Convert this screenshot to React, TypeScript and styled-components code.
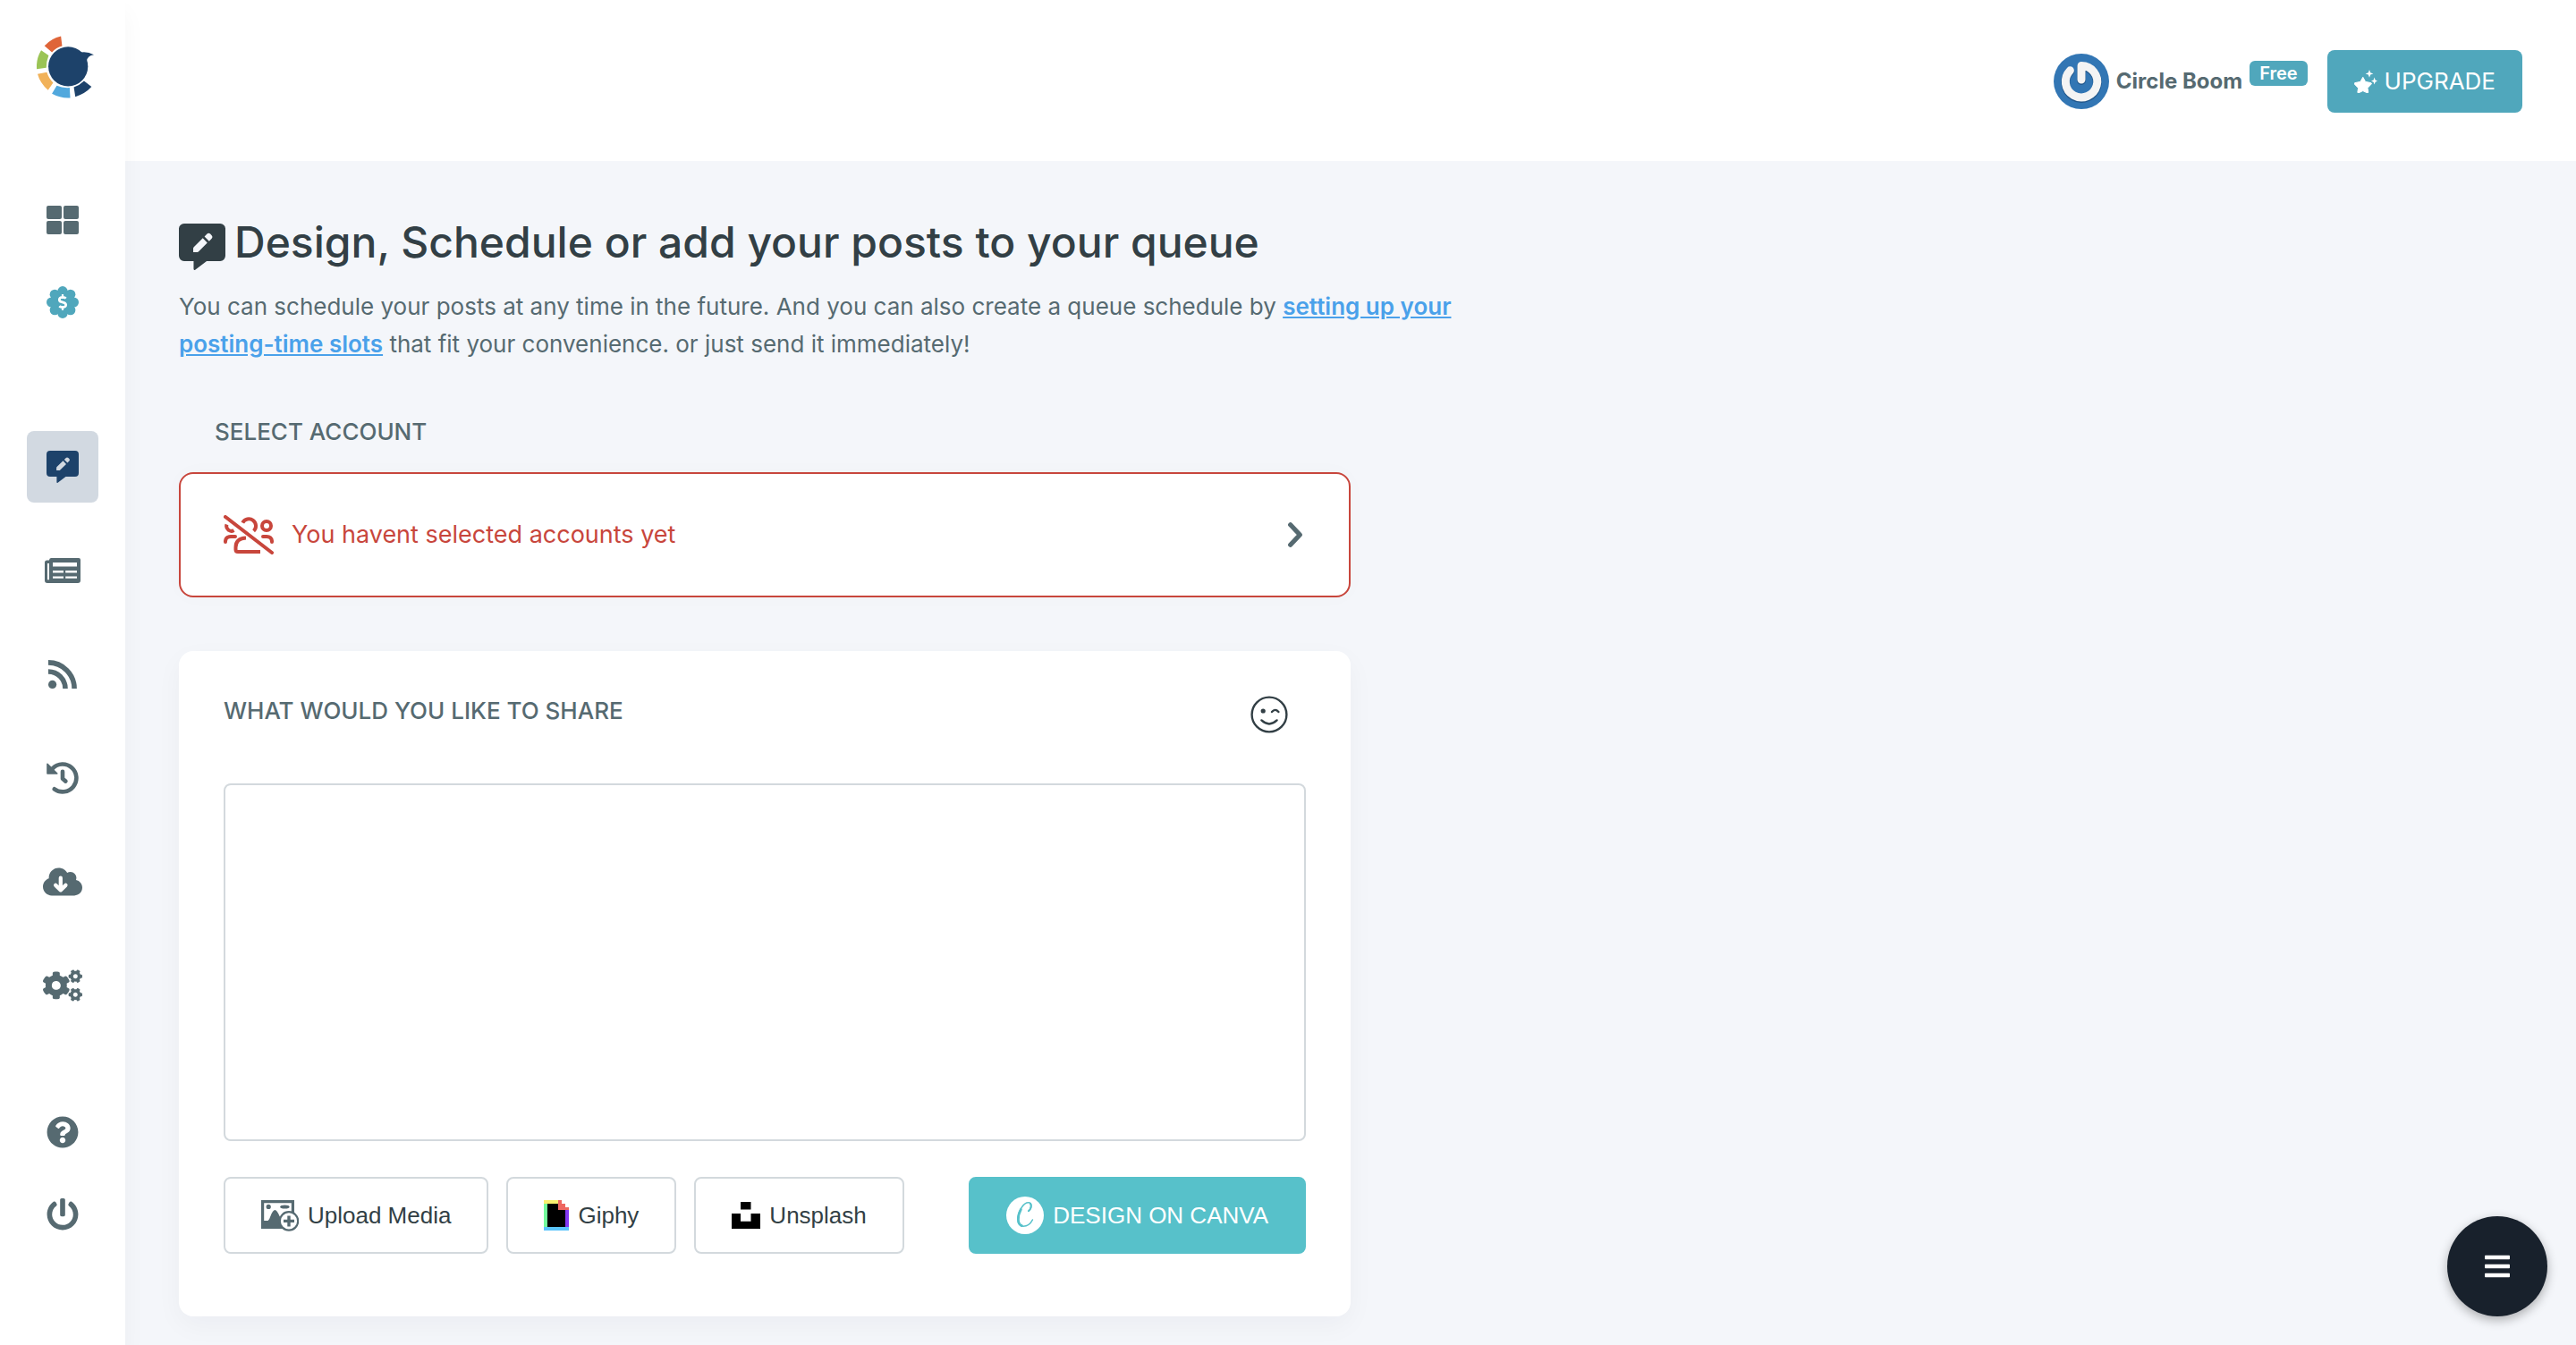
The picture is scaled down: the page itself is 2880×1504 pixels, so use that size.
import React from "react";
import styled, { createGlobalStyle, css } from "styled-components";
import { FaBars, FaCogs, FaDollarSign, FaPowerOff, FaQuestionCircle } from "react-icons/fa";

const color = {
  page: "#f4f6fa",
  text: "#566a71",
  heading: "#323f45",
  teal: "#50a7bc",
  canva: "#57c1ca",
  navy: "#1d426a",
  active: "#d2d9e1",
  danger: "#c8463c",
  border: "#d3d9dd",
  link: "#4aa1ea",
  fab: "#18212c",
};

const uiFont = `Inter, "Noto Sans", sans-serif`;
const buttonFont = `"Liberation Sans", Arial, sans-serif`;

const GlobalStyle = createGlobalStyle`
  *, *::before, *::after { box-sizing: border-box; }
  body {
    margin: 0;
    background: ${color.page};
    color: ${color.text};
    font-family: ${uiFont};
    font-size: 26px;
    line-height: 42px;
  }
  svg { display: block; flex: none; }
`;

/* ---------- layout ---------- */

const Page = styled.div`
  display: flex;
  min-height: 100vh;
`;

const Sidebar = styled.aside`
  position: relative;
  z-index: 1;
  display: flex;
  flex-direction: column;
  align-items: center;
  flex: 0 0 140px;
  padding: 40px 0 32px;
  background: #fff;
  box-shadow: 0 14px 24px rgba(0, 0, 0, 0.04);
`;

const LogoLink = styled.a`
  display: block;
  margin-left: 6px;
`;

const NavGroup = styled.nav<{ $gap: number; $top: number }>`
  display: flex;
  flex-direction: column;
  gap: ${(p) => p.$gap}px;
  margin-top: ${(p) => p.$top}px;
`;

const NavLink = styled.a<{ $active?: boolean; $accent?: boolean }>`
  display: flex;
  align-items: center;
  justify-content: center;
  width: 80px;
  height: 80px;
  border-radius: 8px;
  color: ${(p) => (p.$accent ? color.teal : color.text)};
  ${(p) =>
    p.$active &&
    css`
      background: ${color.active};
      color: ${color.navy};
    `}
`;

const Body = styled.div`
  flex: 1;
  min-width: 0;
`;

const Header = styled.header`
  display: flex;
  align-items: center;
  justify-content: flex-end;
  gap: 22px;
  padding: 56px 60px 54px;
  background: #fff;
`;

const User = styled.a`
  display: flex;
  align-items: center;
  gap: 8px;
  color: inherit;
  text-decoration: none;
`;

const UserName = styled.span`
  font-size: 24px;
  font-weight: 700;
`;

const Badge = styled.span`
  margin-bottom: 18px;
  padding: 0 11px;
  border-radius: 6px;
  background: ${color.teal};
  color: #fff;
  font-size: 20px;
  font-weight: 600;
  line-height: 28px;
`;

const UpgradeButton = styled.button`
  display: flex;
  align-items: center;
  gap: 8px;
  height: 70px;
  padding: 0 30px;
  border: 0;
  border-radius: 8px;
  background: ${color.teal};
  color: #fff;
  font: 400 26px/42px ${uiFont};
  cursor: pointer;
`;

const Main = styled.main`
  padding: 60px 60px 32px;
`;

const Title = styled.h1`
  display: flex;
  align-items: flex-end;
  gap: 10px;
  margin: 0;
  color: ${color.heading};
  font-size: 48px;
  font-weight: 500;
  line-height: 62px;
`;

const Intro = styled.p`
  width: 55%;
  margin: 20px 0 0;
`;

const IntroLink = styled.a`
  color: ${color.link};
  font-weight: 600;
  text-decoration: underline;
`;

const Column = styled.div`
  width: 50%;
  min-width: 1240px;
`;

const SectionTitle = styled.h2`
  margin: 0;
  font-size: 26px;
  font-weight: 500;
  line-height: 34px;
`;

const AccountSection = styled.section`
  padding-top: 60px;

  ${SectionTitle} {
    padding-left: 40px;
  }
`;

const cardShape = css`
  border-radius: 16px;
  background: #fff;
`;

const AccountPicker = styled.button`
  ${cardShape}
  display: flex;
  align-items: center;
  width: 100%;
  height: 140px;
  margin-top: 28px;
  padding: 0 48px;
  border: 2px solid ${color.danger};
  box-shadow: 0 0 24px rgba(20, 20, 60, 0.02);
  color: ${color.danger};
  font: 400 27px/42px ${uiFont};
  text-align: left;
  cursor: pointer;
`;

const PickerLabel = styled.span`
  flex: 1;
  margin-left: 20px;
`;

const PickerArrow = styled.span`
  color: ${color.text};
`;

const Composer = styled.section`
  ${cardShape}
  margin-top: 60px;
  padding: 50px 50px 70px;
  box-shadow: 0 10px 30px rgba(20, 20, 60, 0.04);
`;

const ComposerHead = styled.div`
  display: flex;
  justify-content: space-between;
  align-items: flex-start;
`;

const EmojiButton = styled.button`
  margin-right: 20px;
  padding: 0;
  border: 0;
  background: none;
  color: ${color.heading};
  cursor: pointer;
`;

const PostText = styled.textarea`
  display: block;
  width: 100%;
  height: 400px;
  margin-top: 56px;
  padding: 20px;
  border: 2px solid ${color.border};
  border-radius: 8px;
  background: #fff;
  color: ${color.heading};
  font: 400 26px/42px ${uiFont};
  resize: none;
`;

const Actions = styled.div`
  display: flex;
  gap: 20px;
  margin-top: 40px;
`;

const ActionButton = styled.button<{ $primary?: boolean }>`
  display: flex;
  align-items: center;
  gap: 10px;
  height: 86px;
  padding: 0 40px;
  border: 2px solid ${(p) => (p.$primary ? color.canva : color.border)};
  border-radius: 8px;
  background: ${(p) => (p.$primary ? color.canva : "#fff")};
  color: ${(p) => (p.$primary ? "#fff" : color.heading)};
  font: 400 26px/30px ${buttonFont};
  margin-left: ${(p) => (p.$primary ? "auto" : "0")};
  cursor: pointer;
`;

const MenuFab = styled.button`
  position: fixed;
  right: 32px;
  bottom: 32px;
  z-index: 2;
  display: flex;
  align-items: center;
  justify-content: center;
  width: 112px;
  height: 112px;
  padding: 0;
  border: 0;
  border-radius: 50%;
  background: ${color.fab};
  color: #fff;
  box-shadow: 0 4px 12px rgba(0, 0, 0, 0.3);
  cursor: pointer;
`;

/* ---------- drawings ---------- */

const Logo = () => (
  <svg width="64" height="70" viewBox="123 119 191 208" aria-hidden="true">
    <path fill="#df6539" d="M149 152Q172 127 204 120L208 153Q188 158 174 174Z" />
    <path fill="#9bc455" d="M138 167L163 184Q155 204 155 225L123 230Q121 194 138 167Z" />
    <path fill="#f1b25a" d="M126 246L157 240Q163 260 178 275L161 300Q134 276 126 246Z" />
    <path fill="#51a8dd" d="M190 285Q210 294 233 292L235 326Q203 328 174 312Z" />
    <path fill={color.navy} d="M247 290Q267 283 281 269L306 289Q284 313 252 322Z" />
    <circle cx="228" cy="221" r="66" fill={color.navy} />
    <path fill={color.navy} d="M262 176Q288 168 314 182Q292 184 290 204Z" />
  </svg>
);

const GridIcon = () => (
  <svg width="36" height="32" viewBox="0 0 36 32" fill="currentColor" aria-hidden="true">
    <rect width="17" height="15" rx="2" />
    <rect x="19" width="17" height="15" rx="2" />
    <rect y="17" width="17" height="15" rx="2" />
    <rect x="19" y="17" width="17" height="15" rx="2" />
  </svg>
);

const lobes = [0, 1, 2, 3, 4, 5, 6, 7].map((i) => (i * Math.PI) / 4);

const PriceBadgeIcon = () => (
  <svg width="36" height="36" viewBox="0 0 36 36" fill="currentColor" aria-hidden="true">
    <circle cx="18" cy="18" r="14" />
    {lobes.map((a) => (
      <circle key={a} cx={18 + 12.4 * Math.cos(a)} cy={18 + 12.4 * Math.sin(a)} r="5.6" />
    ))}
    <FaDollarSign x="9" y="9" size={18} color="#fff" />
  </svg>
);

const ComposeIcon = ({ size, cut }: { size: number; cut: string }) => (
  <svg width={size} height={size} viewBox="0 0 36 36" aria-hidden="true">
    <path
      fill="currentColor"
      d="M4 0H32A4 4 0 0 1 36 4V25A4 4 0 0 1 32 29H21.5L12.6 35.8Q11.4 36.4 11.4 35V29H4A4 4 0 0 1 0 25V4A4 4 0 0 1 4 0Z"
    />
    <path
      fill={cut}
      d="M18.5 11.3L22 14.9L15.3 21.6Q14.8 22.1 14.2 22.1H11.1V19.2Q11.1 18.6 11.6 18.1Z
         M19.8 10L21.8 8Q23 6.8 24.3 8L25.4 9.1Q26.6 10.3 25.4 11.6L23.4 13.6Z"
    />
  </svg>
);

const NewsIcon = () => (
  <svg width="40" height="28" viewBox="0 0 40 28" aria-hidden="true">
    <path
      fill="currentColor"
      fillRule="evenodd"
      d="M7 0H38Q40 0 40 2V25Q40 28 37 28H3Q0 28 0 25V5Q0 2.5 2.5 2.5H5Q5 0 7 0Z
         M9 5V9.4H36V5ZM9 14V16.4H21V14ZM23.2 14V16.4H36V14ZM9 20.4V22.8H21V20.4ZM23.2 20.4V22.8H36V20.4Z
         M3 6V23.5Q3 24.4 4 24.4Q5 24.4 5 23.5V6Z"
    />
  </svg>
);

const FeedIcon = () => (
  <svg
    width="32"
    height="32"
    viewBox="0 0 32 32"
    fill="none"
    stroke="currentColor"
    strokeWidth="5.6"
    aria-hidden="true"
  >
    <circle cx="4.6" cy="27.4" r="4.6" fill="currentColor" stroke="none" />
    <path d="M0 2.9A29.1 29.1 0 0 1 29.1 32" />
    <path d="M0 13A19 19 0 0 1 19 32" />
  </svg>
);

const HistoryIcon = () => (
  <svg
    width="36"
    height="36"
    viewBox="0 0 36 36"
    fill="none"
    stroke="currentColor"
    strokeWidth="4.6"
    strokeLinecap="round"
    strokeLinejoin="round"
    aria-hidden="true"
  >
    <path d="M7 7.2A15.4 15.4 0 1 1 8.8 30.3" />
    <path d="M18 10.8V18.8L21.4 21.6" />
    <path d="M1 2.4V13H11.8Z" fill="currentColor" strokeWidth="1.6" />
  </svg>
);

const CloudIcon = () => (
  <svg width="44" height="36" viewBox="0 0 640 512" aria-hidden="true">
    <path
      fill="currentColor"
      d="M144 480C64.5 480 0 415.5 0 336c0-62.8 40.2-116.2 96.2-135.9c-.1-2.7-.2-5.4-.2-8.1c0-88.4 71.6-160 160-160c59.3 0 111 32.2 138.7 80.2C409.9 102 428.3 96 448 96c53 0 96 43 96 96c0 12.2-2.3 23.8-6.4 34.6C596 238.4 640 290.1 640 352c0 70.7-57.3 128-128 128H144z"
    />
    <path
      d="M288 194V388M206 312L288 392L370 312"
      fill="none"
      stroke="#fff"
      strokeWidth="62"
      strokeLinecap="round"
      strokeLinejoin="round"
    />
  </svg>
);

const ChevronIcon = () => (
  <svg
    width="20"
    height="28"
    viewBox="0 0 20 28"
    fill="none"
    stroke="currentColor"
    strokeWidth="5.2"
    strokeLinecap="round"
    strokeLinejoin="round"
    aria-hidden="true"
  >
    <path d="M2.7 2.8L13.3 14L2.7 25.2" />
  </svg>
);

const Avatar = () => (
  <svg width="62" height="62" viewBox="0 0 62 62" fill="none" role="img" aria-label="Profile">
    <circle cx="31" cy="31" r="31" fill="#3276b4" />
    <g strokeLinecap="round" strokeLinejoin="round">
      <path d="M31 30V14.5A17.7 17.7 0 1 1 18.4 19.8" stroke="#22588c" strokeWidth="10" />
      <path d="M31 29V13.5A17.7 17.7 0 1 1 18.4 18.8" stroke="#f4f4f4" strokeWidth="9" />
    </g>
  </svg>
);

const SparkleIcon = () => (
  <svg width="26" height="26" viewBox="0 0 26 26" fill="currentColor" aria-hidden="true">
    <path
      d="M9.8 8.3L12.6 13.4L18.6 14.6Q20 15 19 16.2L15 20.4L15.7 25Q15.7 26.2 14.5 25.8L9.8 23.6L5 25.8Q3.8 26.2 3.9 25L4.6 20.4L.5 16.2Q-.3 15 1 14.6L6.9 13.4Z"
      stroke="currentColor"
      strokeWidth="1"
    />
    <path d="M17 0L18.2 3.2L21.4 4.4L18.2 5.6L17 8.8L15.8 5.6L12.6 4.4L15.8 3.2Z" />
    <path d="M22.6 8.6L23.6 11.5L26 12.6L23.6 13.7L22.6 16.6L21.6 13.7L19 12.6L21.6 11.5Z" />
  </svg>
);

const UsersSlashIcon = () => (
  <svg
    width="56"
    height="44"
    viewBox="0 0 56 44"
    fill="none"
    stroke="currentColor"
    strokeWidth="4"
    aria-hidden="true"
  >
    <path d="M2 2L54 42" strokeLinecap="round" />
    <circle cx="48" cy="12" r="5" />
    <path d="M3.5 10.5A5.5 5.5 0 0 0 11.5 17" />
    <path d="M21.3 8.6A7.8 7.8 0 1 1 33.6 17.8" />
    <path d="M2 30V29Q2.5 24 8 24H13" strokeLinecap="round" />
    <path d="M44 24H48Q53.5 24 54 29V30" strokeLinecap="round" />
    <path d="M25 25.5Q13.5 26 13.5 36V38.5Q13.5 41 16 41H41" />
  </svg>
);

const WinkIcon = () => (
  <svg
    width="42"
    height="42"
    viewBox="0 0 42 42"
    fill="none"
    stroke="currentColor"
    strokeWidth="2.4"
    strokeLinecap="round"
    aria-hidden="true"
  >
    <circle cx="21" cy="21" r="19.4" />
    <circle cx="14.2" cy="17" r="2.6" fill="currentColor" stroke="none" />
    <path d="M24 18Q27.6 13.8 31.4 18" />
    <path d="M12.4 27.4Q21 35.4 29.6 27.4" />
  </svg>
);

const UploadIcon = () => (
  <svg width="42" height="36" viewBox="0 0 42 36" aria-hidden="true">
    <g fill={color.text}>
      <path fillRule="evenodd" d="M0 1H37V33H0ZM3.2 4.2V24H33.8V4.2Z" />
      <circle cx="8.2" cy="8.4" r="2.6" />
      <ellipse cx="26.4" cy="8.4" rx="5.2" ry="2" />
      <path d="M3 24H7.6Q9.4 22.6 10.6 18.6Q13 12 15.4 12Q17.6 12 20.6 19L24 24V33H3Z" />
    </g>
    <circle cx="31" cy="24.4" r="10.2" fill="#fff" stroke={color.text} strokeWidth="2.2" />
    <path d="M25 24.4H37M31 18.4V30.4" stroke={color.text} strokeWidth="3.4" />
  </svg>
);

const GiphyIcon = () => (
  <svg width="28" height="34" viewBox="0 0 28 34" shapeRendering="crispEdges" aria-hidden="true">
    <path fill="#000" d="M4 4H24V30H4Z" />
    <path fill="#73fb9b" d="M0 4H4V30H0Z" />
    <path fill="#f9ef6e" d="M0 0H16V4H0Z" />
    <path fill="#5bc5fb" d="M0 30H28V34H0Z" />
    <path fill="#8338f3" d="M24 11H28V30H24Z" />
    <path fill="#ee6660" d="M16 0H20V4H24V8H28V11H16Z" />
  </svg>
);

const UnsplashIcon = () => (
  <svg width="32" height="30" viewBox="0 0 32 30" aria-hidden="true">
    <path fill="#000" d="M10 0H21.5V8.6H10ZM0 13H10V21.8H21.5V13H32V30H0Z" />
  </svg>
);

const CanvaIcon = () => (
  <svg width="42" height="42" viewBox="0 0 42 42" fill="none" aria-hidden="true">
    <circle cx="21" cy="21" r="21" fill="#fff" />
    <g stroke={color.canva} strokeLinecap="round" strokeLinejoin="round">
      <path
        strokeWidth="1.6"
        d="M24.8 16.4C28.4 14.2 29.4 7.2 25.2 6.8C19.4 6.4 13.4 16 13 25C12.8 30 15.4 33.2 19 33.2C23.6 33.2 27.4 30 29.4 26"
      />
      <path strokeWidth="2.8" d="M16.4 14.4C14.2 18.4 13.2 22.4 13.4 26C13.6 29.4 15 31.8 17.4 32.6" />
      <path strokeWidth="2" d="M25.2 15.8C27.8 13.6 28.4 9.4 26.8 7.8" />
    </g>
  </svg>
);

/* ---------- page ---------- */

const mainNav = [
  { label: "Create post", icon: <ComposeIcon size={36} cut={color.active} />, active: true },
  { label: "Articles", icon: <NewsIcon /> },
  { label: "RSS feeds", icon: <FeedIcon /> },
  { label: "History", icon: <HistoryIcon /> },
  { label: "Downloads", icon: <CloudIcon /> },
  { label: "Settings", icon: <FaCogs size={44} /> },
];

export default function App() {
  return (
    <>
      <GlobalStyle />
      <Page>
        <Sidebar>
          <LogoLink href="#home" aria-label="Home">
            <Logo />
          </LogoLink>
          <NavGroup $gap={12} $top={96} aria-label="Overview">
            <NavLink href="#dashboard" aria-label="Dashboard">
              <GridIcon />
            </NavLink>
            <NavLink href="#pricing" aria-label="Pricing" $accent>
              <PriceBadgeIcon />
            </NavLink>
          </NavGroup>
          <NavGroup $gap={36} $top={104} aria-label="Main">
            {mainNav.map((item) => (
              <NavLink
                key={item.label}
                href="#"
                aria-label={item.label}
                aria-current={item.active ? "page" : undefined}
                $active={item.active}
              >
                {item.icon}
              </NavLink>
            ))}
          </NavGroup>
          <NavGroup $gap={12} $top={84} aria-label="Account">
            <NavLink href="#help" aria-label="Help">
              <FaQuestionCircle size={36} />
            </NavLink>
            <NavLink href="#logout" aria-label="Log out">
              <FaPowerOff size={36} />
            </NavLink>
          </NavGroup>
        </Sidebar>

        <Body>
          <Header>
            <User href="#profile">
              <Avatar />
              <UserName>Circle Boom</UserName>
              <Badge>Free</Badge>
            </User>
            <UpgradeButton type="button">
              <SparkleIcon />
              UPGRADE
            </UpgradeButton>
          </Header>

          <Main>
            <Title>
              <ComposeIcon size={52} cut={color.page} />
              Design, Schedule or add your posts to your queue
            </Title>
            <Intro>
              You can schedule your posts at any time in the future. And you can also create a queue
              schedule by <IntroLink href="#slots">setting up your posting-time slots</IntroLink>{" "}
              that fit your convenience. or just send it immediately!
            </Intro>

            <Column>
              <AccountSection>
                <SectionTitle>SELECT ACCOUNT</SectionTitle>
                <AccountPicker type="button">
                  <UsersSlashIcon />
                  <PickerLabel>You havent selected accounts yet</PickerLabel>
                  <PickerArrow>
                    <ChevronIcon />
                  </PickerArrow>
                </AccountPicker>
              </AccountSection>

              <Composer>
                <ComposerHead>
                  <SectionTitle as="label" htmlFor="post-text">
                    WHAT WOULD YOU LIKE TO SHARE
                  </SectionTitle>
                  <EmojiButton type="button" aria-label="Insert emoji">
                    <WinkIcon />
                  </EmojiButton>
                </ComposerHead>
                <PostText id="post-text" />
                <Actions>
                  <ActionButton type="button">
                    <UploadIcon />
                    Upload Media
                  </ActionButton>
                  <ActionButton type="button">
                    <GiphyIcon />
                    Giphy
                  </ActionButton>
                  <ActionButton type="button">
                    <UnsplashIcon />
                    Unsplash
                  </ActionButton>
                  <ActionButton type="button" $primary>
                    <CanvaIcon />
                    DESIGN ON CANVA
                  </ActionButton>
                </Actions>
              </Composer>
            </Column>
          </Main>
        </Body>
      </Page>
      <MenuFab type="button" aria-label="Open menu">
        <FaBars size={32} />
      </MenuFab>
    </>
  );
}
